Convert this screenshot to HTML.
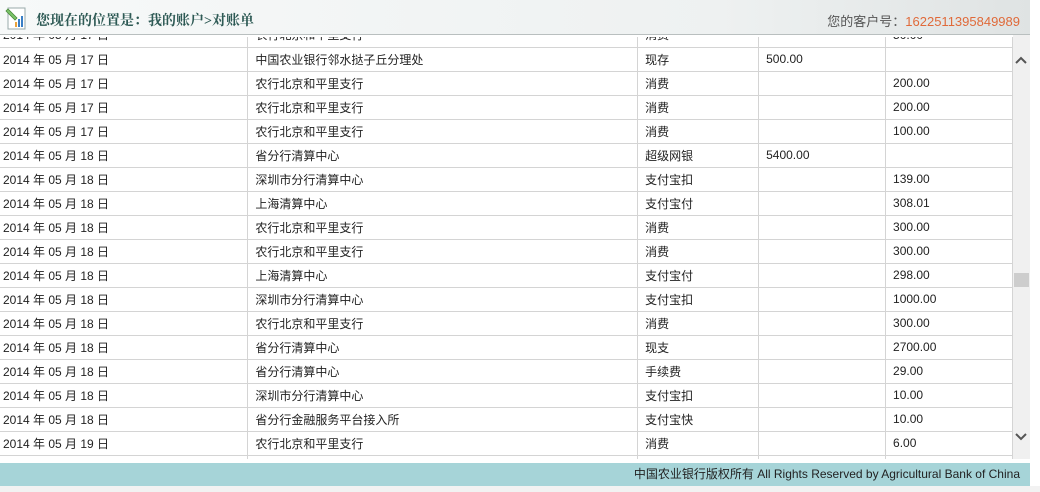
<!DOCTYPE html>
<html><head><meta charset="utf-8"><style>
*{margin:0;padding:0;box-sizing:border-box}
body{width:1040px;height:492px;background:#fff;position:relative;overflow:hidden;font-family:"Liberation Sans","Noto Sans CJK SC",sans-serif;font-size:12px;color:#222}
.hd{position:absolute;left:0;top:0;width:1030px;height:35px;background:linear-gradient(to right,#f7f9f9,#eef1f1 70%,#dfe3e3);border-bottom:1px solid #b9bfbf}
.hd .t{position:absolute;left:36px;top:10px;font-size:14px;font-weight:bold;color:#2e5a55;font-family:"Liberation Serif","Noto Serif CJK SC",serif}
.hd .c{position:absolute;right:10px;top:11px;font-size:13px;color:#555}
.hd .c span{color:#e06a3a}
.wrap{position:absolute;left:0;top:37px;width:1013px;height:422px;overflow:hidden}
table{position:absolute;left:0;top:-14px;border-collapse:collapse;width:1013px}
td{height:24px;border-bottom:1px solid #d4d4d4;border-right:1px solid #d4d4d4;padding:0 0 0 7px;font-size:12px;white-space:nowrap;vertical-align:middle}
td:first-child{padding-left:3px}
.sb{position:absolute;left:1013px;top:35px;width:17px;height:424px;background:#f0f0f0}
.th{position:absolute;left:1014px;top:273px;width:15px;height:14px;background:#cdcdcd}
.ft{position:absolute;left:0;top:463px;width:1030px;height:23px;background:#a6d4d8;font-size:12px;color:#222;text-align:right;padding-right:10px;line-height:23px}
.fb{position:absolute;left:0;top:486px;width:1040px;height:6px;background:#f2f2f2}
</style></head><body>
<div class="hd">
<svg style="position:absolute;left:4px;top:5px" width="24" height="26" viewBox="0 0 24 26"><rect x="4" y="3" width="17" height="21" fill="#fff" stroke="#9aa" /><path d="M2 6 L11 15 L13 13 L4 4Z" fill="#7cc46a" stroke="#4a8a3a" stroke-width=".8"/><rect x="11" y="17" width="2" height="5" fill="#e9a23b"/><rect x="14" y="14" width="2" height="8" fill="#3a7fc6"/><rect x="17" y="11" width="2" height="11" fill="#3a7fc6"/></svg>
<div class="t">您现在的位置是：我的账户&gt;对账单</div>
<div class="c">您的客户号：<span>1622511395849989</span></div>
</div>
<div class="wrap"><table>
<colgroup><col style="width:248px"><col style="width:390px"><col style="width:121px"><col style="width:127px"><col style="width:127px"></colgroup>
<tr><td>2014 年 05 月 17 日</td><td>农行北京和平里支行</td><td>消费</td><td></td><td>50.00</td></tr>
<tr><td>2014 年 05 月 17 日</td><td>中国农业银行邻水挞子丘分理处</td><td>现存</td><td>500.00</td><td></td></tr>
<tr><td>2014 年 05 月 17 日</td><td>农行北京和平里支行</td><td>消费</td><td></td><td>200.00</td></tr>
<tr><td>2014 年 05 月 17 日</td><td>农行北京和平里支行</td><td>消费</td><td></td><td>200.00</td></tr>
<tr><td>2014 年 05 月 17 日</td><td>农行北京和平里支行</td><td>消费</td><td></td><td>100.00</td></tr>
<tr><td>2014 年 05 月 18 日</td><td>省分行清算中心</td><td>超级网银</td><td>5400.00</td><td></td></tr>
<tr><td>2014 年 05 月 18 日</td><td>深圳市分行清算中心</td><td>支付宝扣</td><td></td><td>139.00</td></tr>
<tr><td>2014 年 05 月 18 日</td><td>上海清算中心</td><td>支付宝付</td><td></td><td>308.01</td></tr>
<tr><td>2014 年 05 月 18 日</td><td>农行北京和平里支行</td><td>消费</td><td></td><td>300.00</td></tr>
<tr><td>2014 年 05 月 18 日</td><td>农行北京和平里支行</td><td>消费</td><td></td><td>300.00</td></tr>
<tr><td>2014 年 05 月 18 日</td><td>上海清算中心</td><td>支付宝付</td><td></td><td>298.00</td></tr>
<tr><td>2014 年 05 月 18 日</td><td>深圳市分行清算中心</td><td>支付宝扣</td><td></td><td>1000.00</td></tr>
<tr><td>2014 年 05 月 18 日</td><td>农行北京和平里支行</td><td>消费</td><td></td><td>300.00</td></tr>
<tr><td>2014 年 05 月 18 日</td><td>省分行清算中心</td><td>现支</td><td></td><td>2700.00</td></tr>
<tr><td>2014 年 05 月 18 日</td><td>省分行清算中心</td><td>手续费</td><td></td><td>29.00</td></tr>
<tr><td>2014 年 05 月 18 日</td><td>深圳市分行清算中心</td><td>支付宝扣</td><td></td><td>10.00</td></tr>
<tr><td>2014 年 05 月 18 日</td><td>省分行金融服务平台接入所</td><td>支付宝快</td><td></td><td>10.00</td></tr>
<tr><td>2014 年 05 月 19 日</td><td>农行北京和平里支行</td><td>消费</td><td></td><td>6.00</td></tr>
<tr><td>2014 年 05 月 19 日</td><td>农行北京和平里支行</td><td>消费</td><td></td><td>6.00</td></tr>
</table></div>
<div class="sb"></div>
<svg style="position:absolute;left:1015px;top:56px" width="12" height="10"><path d="M1 7 L6 2 L11 7" fill="none" stroke="#555" stroke-width="2"/></svg>
<svg style="position:absolute;left:1015px;top:432px" width="12" height="10"><path d="M1 2 L6 7 L11 2" fill="none" stroke="#555" stroke-width="2"/></svg>
<div class="th"></div>
<div class="ft">中国农业银行版权所有 All Rights Reserved by Agricultural Bank of China</div>
<div class="fb"></div>
</body></html>
